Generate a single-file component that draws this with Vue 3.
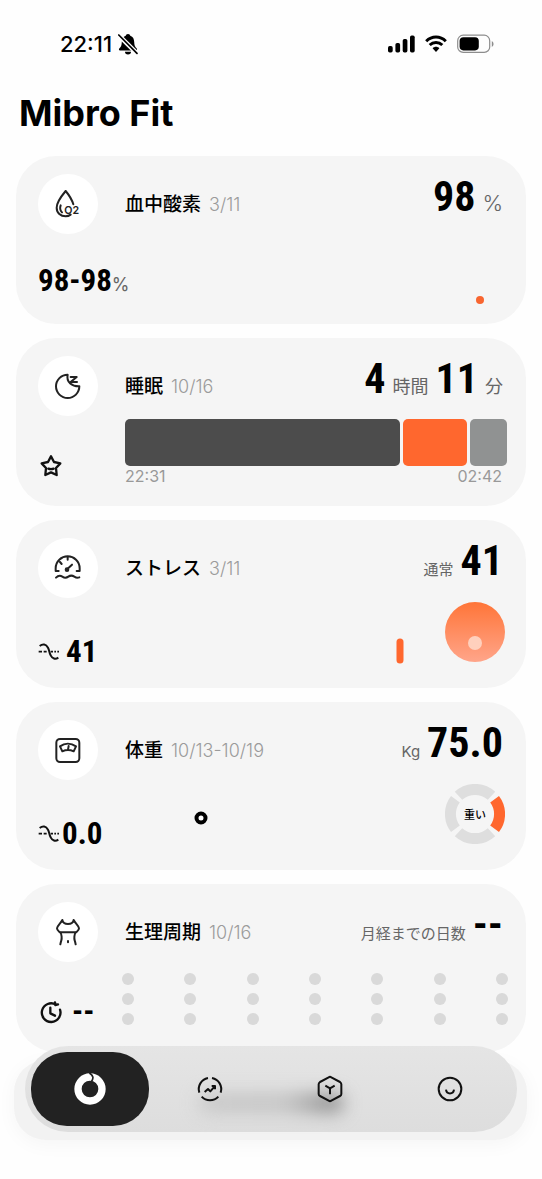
<script setup>
import { ref } from 'vue'

const cards = [
  { id: 'oxygen', title: '血中酸素', date: '3/11', icon: 'drop' },
  { id: 'sleep', title: '睡眠', date: '10/16', icon: 'moon' },
  { id: 'stress', title: 'ストレス', date: '3/11', icon: 'gauge' },
  { id: 'weight', title: '体重', date: '10/13-10/19', icon: 'scale' },
  { id: 'cycle', title: '生理周期', date: '10/16', icon: 'body' },
]

const sleepStages = [
  { name: 'deep', share: 274 },
  { name: 'light', share: 64 },
  { name: 'awake', share: 37 },
]

const tabs = [
  { id: 'home', label: 'ホーム' },
  { id: 'trend', label: 'トレンド' },
  { id: 'device', label: 'デバイス' },
  { id: 'profile', label: 'プロフィール' },
]
const activeTab = ref('home')
</script>

<template>
  <div class="screen">
    <header class="status">
      <div class="status-side">
        <span class="clock">22:11</span>
        <svg class="bell" viewBox="0 0 20 22" aria-hidden="true">
          <path d="M10 1C8.500 1 8 2 7.700 2.700C4.900 3.600 3.900 6 3.800 9C3.700 12.500 3 14 1.300 15.500C.6 16.200.9 17.500 2 17.500H18C19.100 17.500 19.400 16.200 18.700 15.500C17 14 16.300 12.500 16.200 9C16.100 6 15.100 3.600 12.300 2.700C12 2 11.500 1 10 1ZM7 18.700A3 2.700 0 0 0 13 18.700Z" fill="#000" />
          <path d="M.5 2L19 20.500" stroke="#fff" stroke-width="4.500" />
          <path d="M.8 2L19 20.300" stroke="#000" stroke-width="1.700" stroke-linecap="round" />
        </svg>
      </div>
      <div class="status-side indicators">
        <svg class="signal" viewBox="0 0 27 18" aria-hidden="true">
          <rect x="0" y="11" width="4.700" height="6.500" rx="1.700" />
          <rect x="7.400" y="8" width="4.700" height="9.500" rx="1.700" />
          <rect x="14.700" y="4" width="4.700" height="13.500" rx="1.700" />
          <rect x="22" y="0.500" width="4.700" height="17" rx="1.700" />
        </svg>
        <svg class="wifi" viewBox="0 0 22 18" fill="none" stroke="#000" aria-hidden="true">
          <path d="M1.200 6.200C6.800.7 15.200.7 20.800 6.200" stroke-width="3" />
          <path d="M4.700 10C8.300 6.500 13.700 6.500 17.300 10" stroke-width="3" />
          <path d="M7.600 13.300C9.400 11.300 12.600 11.300 14.400 13.300L11 16.900Z" fill="#000" stroke="none" />
        </svg>
        <svg class="battery" viewBox="0 0 37 20" aria-hidden="true">
          <rect x="0.700" y="1.200" width="32" height="17.200" rx="5.500" fill="none" stroke="#8d8d8d" stroke-width="1.200" />
          <rect x="2.600" y="3.200" width="19.200" height="13.200" rx="3.800" />
          <path d="M34.800 7V13Q36.600 12 36.600 10T34.800 7Z" fill="#8d8d8d" />
        </svg>
      </div>
    </header>

    <h1>Mibro Fit</h1>

    <main class="cards">
      <article v-for="card in cards" :key="card.id" class="card" :class="card.id">
        <div class="badge">
          <svg viewBox="0 0 90 90" class="line-icon" aria-hidden="true">
            <template v-if="card.icon === 'drop'">
              <path d="M38 6C28 18 11 38 11 56C11 72 23 82 38 82C44 82 49 80 53 77M38 6C48 18 57 32 61 46M23 49C20 57 21 64 27 70" />
              <text x="34" y="75" class="o2">O2</text>
            </template>
            <template v-else-if="card.icon === 'moon'">
              <path d="M44 11A35 35 0 1 0 79 46C58 47 39 34 44 11ZM53 18H71L53 33H72" />
            </template>
            <template v-else-if="card.icon === 'gauge'">
              <path d="M17 54H8V46C8 25 25 10 44 10S80 25 80 46V54H71M44 10V20M21 27L26 33M43 48L57 35" />
              <circle cx="42" cy="50" r="4" fill="#222" />
              <path d="M9 74C16 67 22 67 28 71S39 76 46 71S58 67 64 71S74 75 79 73" />
            </template>
            <template v-else-if="card.icon === 'scale'">
              <rect x="10" y="12" width="69" height="69" rx="11" />
              <path d="M21 34C35 24 54 24 69 34L62 49C51 44 39 44 28 49ZM45 44L47 33" />
            </template>
            <template v-else>
              <path d="M28 9C24 18 12 27 12 34S18 43 22 47S27 64 25 70Q23 76 22 82M62 9C66 18 78 27 78 34S72 43 68 47S63 64 65 70Q67 76 68 82M28 9C31 25 59 25 62 9M22 46H68M45 72V76" />
            </template>
          </svg>
        </div>

        <div class="head">
          <h2>{{ card.title }}</h2>
          <span class="date">{{ card.date }}</span>
          <p class="value">
            <template v-if="card.id === 'oxygen'"><b>98</b><span class="percent">%</span></template>
            <template v-else-if="card.id === 'sleep'"><b>4</b><span class="unit">時間</span><b>11</b><span class="unit">分</span></template>
            <template v-else-if="card.id === 'stress'"><span class="note">通常</span><b>41</b></template>
            <template v-else-if="card.id === 'weight'"><span class="note">Kg</span><b>75.0</b></template>
            <template v-else><span class="note">月経までの日数</span><b>--</b></template>
          </p>
        </div>

        <div class="metric">
          <template v-if="card.id === 'oxygen'"><b>98-98</b><span>%</span></template>
          <svg v-else-if="card.id === 'sleep'" viewBox="0 0 78 78" class="bold-icon star" role="img" aria-label="睡眠スコア">
            <path d="M39 10L48 27L67 31L54 45L56 66L39 58L22 66L24 45L11 31L30 27ZM31 47Q39 50 47 47" />
          </svg>
          <template v-else-if="card.id === 'cycle'">
            <svg viewBox="0 0 78 78" class="bold-icon" aria-hidden="true">
              <path d="M54 17A28 28 0 1 0 66 32M37 26V43L51 50M51 10L52 18L60 16" />
            </svg>
            <b>--</b>
          </template>
          <template v-else>
            <svg viewBox="0 0 66 54" class="average" aria-hidden="true">
              <path d="M5 9C14 2 24 3 30 14C34 21 33 28 38 37C43 47 52 50 61 44" />
              <path d="M2 26H12M17 26H26M38 26H45M49 26H54M58 26H63" stroke-width="5" />
            </svg>
            <b>{{ card.id === 'stress' ? '41' : '0.0' }}</b>
          </template>
        </div>

        <div class="panel">
          <div v-if="card.id === 'oxygen'" class="plot">
            <i class="point" :style="{ left: '93%', top: '73%' }"></i>
          </div>
          <template v-else-if="card.id === 'sleep'">
            <div class="stages">
              <i v-for="stage in sleepStages" :key="stage.name" :class="stage.name" :style="{ flexGrow: stage.share }"></i>
            </div>
            <div class="times"><span>22:31</span><span>02:42</span></div>
          </template>
          <template v-else-if="card.id === 'stress'">
            <div class="plot"><i class="bar" :style="{ left: '90%', top: '59%' }"></i></div>
            <div class="ball"><i></i></div>
          </template>
          <template v-else-if="card.id === 'weight'">
            <div class="plot"><i class="ring" :style="{ left: '25%', top: '42%' }"></i></div>
            <div class="dial">
              <svg viewBox="0 0 60 60" aria-hidden="true">
                <g fill="none" stroke="#dedede" stroke-width="11">
                  <path d="M13.500 11.800A24.500 24.500 0 0 1 46.500 11.800" />
                  <path d="M46.500 48.200A24.500 24.500 0 0 1 13.500 48.200" />
                  <path d="M10.400 44.800A24.500 24.500 0 0 1 10.400 15.200" />
                  <path d="M49.600 15.200A24.500 24.500 0 0 1 49.600 44.800" stroke="#ff672e" />
                </g>
              </svg>
              <span>重い</span>
            </div>
          </template>
          <div v-else class="days">
            <i v-for="n in 21" :key="n"></i>
          </div>
        </div>
      </article>
    </main>

    <nav class="tabbar" aria-label="メイン">
      <i class="glow" aria-hidden="true"></i>
      <button
        v-for="tab in tabs"
        :key="tab.id"
        type="button"
        :aria-label="tab.label"
        :class="{ active: activeTab === tab.id }"
        @click="activeTab = tab.id"
      >
        <svg viewBox="0 0 96 96" aria-hidden="true">
          <template v-if="tab.id === 'home'">
            <circle cx="48" cy="48" r="36" stroke-width="22" />
            <path d="M46 0C58 7 60 16 52 26" stroke="#222" stroke-width="5" />
          </template>
          <template v-else-if="tab.id === 'trend'">
            <path d="M54 15A34 34 0 0 1 80 59M73 71A34 34 0 0 1 23 71M16 59A34 34 0 0 1 42 15M32 57L42 48L49 55L62 40M53 39H63V49" />
          </template>
          <template v-else-if="tab.id === 'device'">
            <path d="M44 13Q48 10 52 13L78 27Q82 30 82 34V63Q82 67 78 69L52 83Q48 86 44 83L18 69Q14 67 14 63V34Q14 30 18 27ZM34 38L48 46L62 38M48 46V64" />
          </template>
          <template v-else>
            <circle cx="48" cy="48" r="34" />
            <path d="M36 50C38 65 58 65 60 50" />
          </template>
        </svg>
      </button>
    </nav>
  </div>
</template>

<style>
body {
  background: #fefefe;
}
</style>

<style scoped>
.screen {
  box-sizing: border-box;
  min-height: 100vh;
  padding: 32px 16px 120px;
  color: #000;
  font-family: Inter, "Noto Sans CJK JP", sans-serif;
}

.status {
  display: flex;
  align-items: center;
  justify-content: space-between;
  height: 24px;
  padding: 0 32px 0 44px;
}

.status-side {
  display: flex;
  align-items: center;
  gap: 6px;
}

.indicators {
  gap: 10px;
}

.clock {
  font-size: 22px;
  font-weight: 500;
  line-height: 24px;
}

.bell {
  width: 20px;
  height: 22px;
}

.signal {
  width: 27px;
  height: 18px;
}

.wifi {
  width: 22px;
  height: 18px;
}

.battery {
  width: 37px;
  height: 20px;
}

h1 {
  margin: 34px 0 20px 3px;
  font-size: 36px;
  font-weight: 700;
  line-height: 46px;
}

h2,
p {
  margin: 0;
}

.cards {
  display: grid;
  gap: 14px;
}

.card {
  display: grid;
  grid-template: 60px 72px / 60px 1fr;
  column-gap: 27px;
  padding: 18px 19px 18px 22px;
  border-radius: 40px;
  background: #f5f5f5;
}

.badge {
  display: grid;
  place-items: center;
  border-radius: 50%;
  background: #fff;
}

.badge svg {
  width: 30px;
  height: 30px;
}

.line-icon {
  fill: none;
  stroke: #222;
  stroke-width: 6;
  stroke-linecap: round;
  stroke-linejoin: round;
}

.o2 {
  fill: #222;
  stroke: none;
  font-size: 32px;
  font-weight: 600;
}

.head {
  display: flex;
  align-items: baseline;
  gap: 8px;
  padding-top: 1px;
  white-space: nowrap;
}

h2 {
  font-size: 19px;
  font-weight: 500;
  line-height: 60px;
}

.date {
  color: #9b9b9b;
  font-size: 18px;
  font-weight: 300;
}

b {
  font-family: "Roboto Condensed", Roboto, sans-serif;
  font-weight: 700;
}

.value {
  display: flex;
  align-items: baseline;
  gap: 7px;
  margin-left: auto;
  padding-right: 4px;
  color: #666;
}

.value b {
  color: #000;
  font-size: 42px;
  line-height: 44px;
}

.percent {
  font-size: 22px;
  font-weight: 300;
}

.unit {
  font-size: 18px;
}

.note {
  font-size: 15px;
}

.metric {
  display: flex;
  align-items: center;
  align-self: start;
  height: 36px;
  margin-top: 36px;
  white-space: nowrap;
}

.metric b {
  font-size: 31px;
  line-height: 36px;
}

.oxygen .metric {
  align-items: baseline;
  margin-top: 29px;
}

.oxygen .metric span {
  color: #666;
  font-size: 18px;
}

.sleep .metric,
.cycle .metric {
  margin-top: 32px;
}

.stress .metric {
  gap: 6px;
}

.weight .metric {
  gap: 2px;
}

.cycle .metric {
  gap: 8px;
}

.bold-icon {
  width: 26px;
  height: 26px;
  flex: none;
  fill: none;
  stroke: #111;
  stroke-width: 7;
  stroke-linecap: round;
  stroke-linejoin: round;
}

.average {
  width: 22px;
  height: 18px;
  flex: none;
  fill: none;
  stroke: #111;
  stroke-width: 6;
}

.panel {
  min-width: 0;
}

.plot {
  position: relative;
  flex: 1;
  height: 90px;
}

.plot i {
  position: absolute;
  box-sizing: border-box;
  transform: translate(-50%, -50%);
}

.point {
  width: 8px;
  height: 8px;
  border-radius: 50%;
  background: #f8652f;
}

.bar {
  width: 7px;
  height: 25px;
  border-radius: 4px;
  background: #ff672e;
}

.ring {
  width: 13px;
  height: 13px;
  border: 4px solid #000;
  border-radius: 50%;
  background: #fff;
}

.stages {
  display: flex;
  gap: 3px;
  height: 47px;
  margin-top: 3px;
}

.stages i {
  flex: 0 1 0;
  border-radius: 5px;
}

.deep {
  background: #4c4c4c;
}

.light {
  background: #ff672e;
}

.awake {
  background: #909292;
}

.times {
  display: flex;
  justify-content: space-between;
  padding-right: 5px;
  color: #999;
  font-size: 16px;
  line-height: 20px;
}

.stress .panel,
.weight .panel {
  display: flex;
  padding-right: 2px;
}

.ball,
.dial {
  display: grid;
  width: 60px;
  height: 60px;
  margin-top: 4px;
  margin-left: 15px;
  border-radius: 50%;
}

.ball {
  place-items: end center;
  background: linear-gradient(#ff7538, #ffa58a);
}

.ball i {
  width: 14px;
  height: 14px;
  margin-bottom: 12px;
  border-radius: 50%;
  background: #ffd0bd;
}

.dial > * {
  grid-area: 1 / 1;
  place-self: center;
}

.dial svg {
  width: 60px;
  height: 60px;
}

.dial span {
  font-size: 11px;
  font-weight: 500;
}

.days {
  display: grid;
  grid-template-columns: repeat(7, 12px);
  justify-content: space-between;
  gap: 8px 0;
  margin: 11px -1px 0 -3px;
}

.days i {
  height: 12px;
  border-radius: 50%;
  background: #d9d9d9;
}

.tabbar {
  position: fixed;
  right: 25px;
  bottom: 47px;
  left: 25px;
  display: grid;
  grid-template-columns: repeat(4, 1fr);
  box-sizing: border-box;
  height: 86px;
  padding: 6px;
}

.tabbar::before {
  position: absolute;
  inset: 14px -10px -8px -11px;
  border-radius: 32px;
  background: #f2f2f2;
  box-shadow: 0 4px 20px #0000000a;
  content: "";
}

.tabbar::after {
  position: absolute;
  inset: 0;
  z-index: 0;
  border-radius: 43px;
  background: linear-gradient(#e5e5e5, #dddddd);
  content: "";
}

.glow {
  position: absolute;
  z-index: 1;
  top: 48px;
  right: 174px;
  width: 144px;
  height: 18px;
  border-radius: 10px;
  background: linear-gradient(90deg, #c6c6c6, #c2c2c2 60%, #7c7c7c);
  filter: blur(9px);
}

button {
  position: relative;
  z-index: 2;
  display: grid;
  place-items: center;
  margin: 0 2px 0 0;
  padding: 0;
  border: 0;
  border-radius: 36px;
  background: none;
  cursor: pointer;
}

button svg {
  width: 32px;
  height: 32px;
  fill: none;
  stroke: #111;
  stroke-width: 6;
  stroke-linejoin: round;
}

.active {
  background: #222;
}

.active svg {
  stroke: #fff;
}
</style>
